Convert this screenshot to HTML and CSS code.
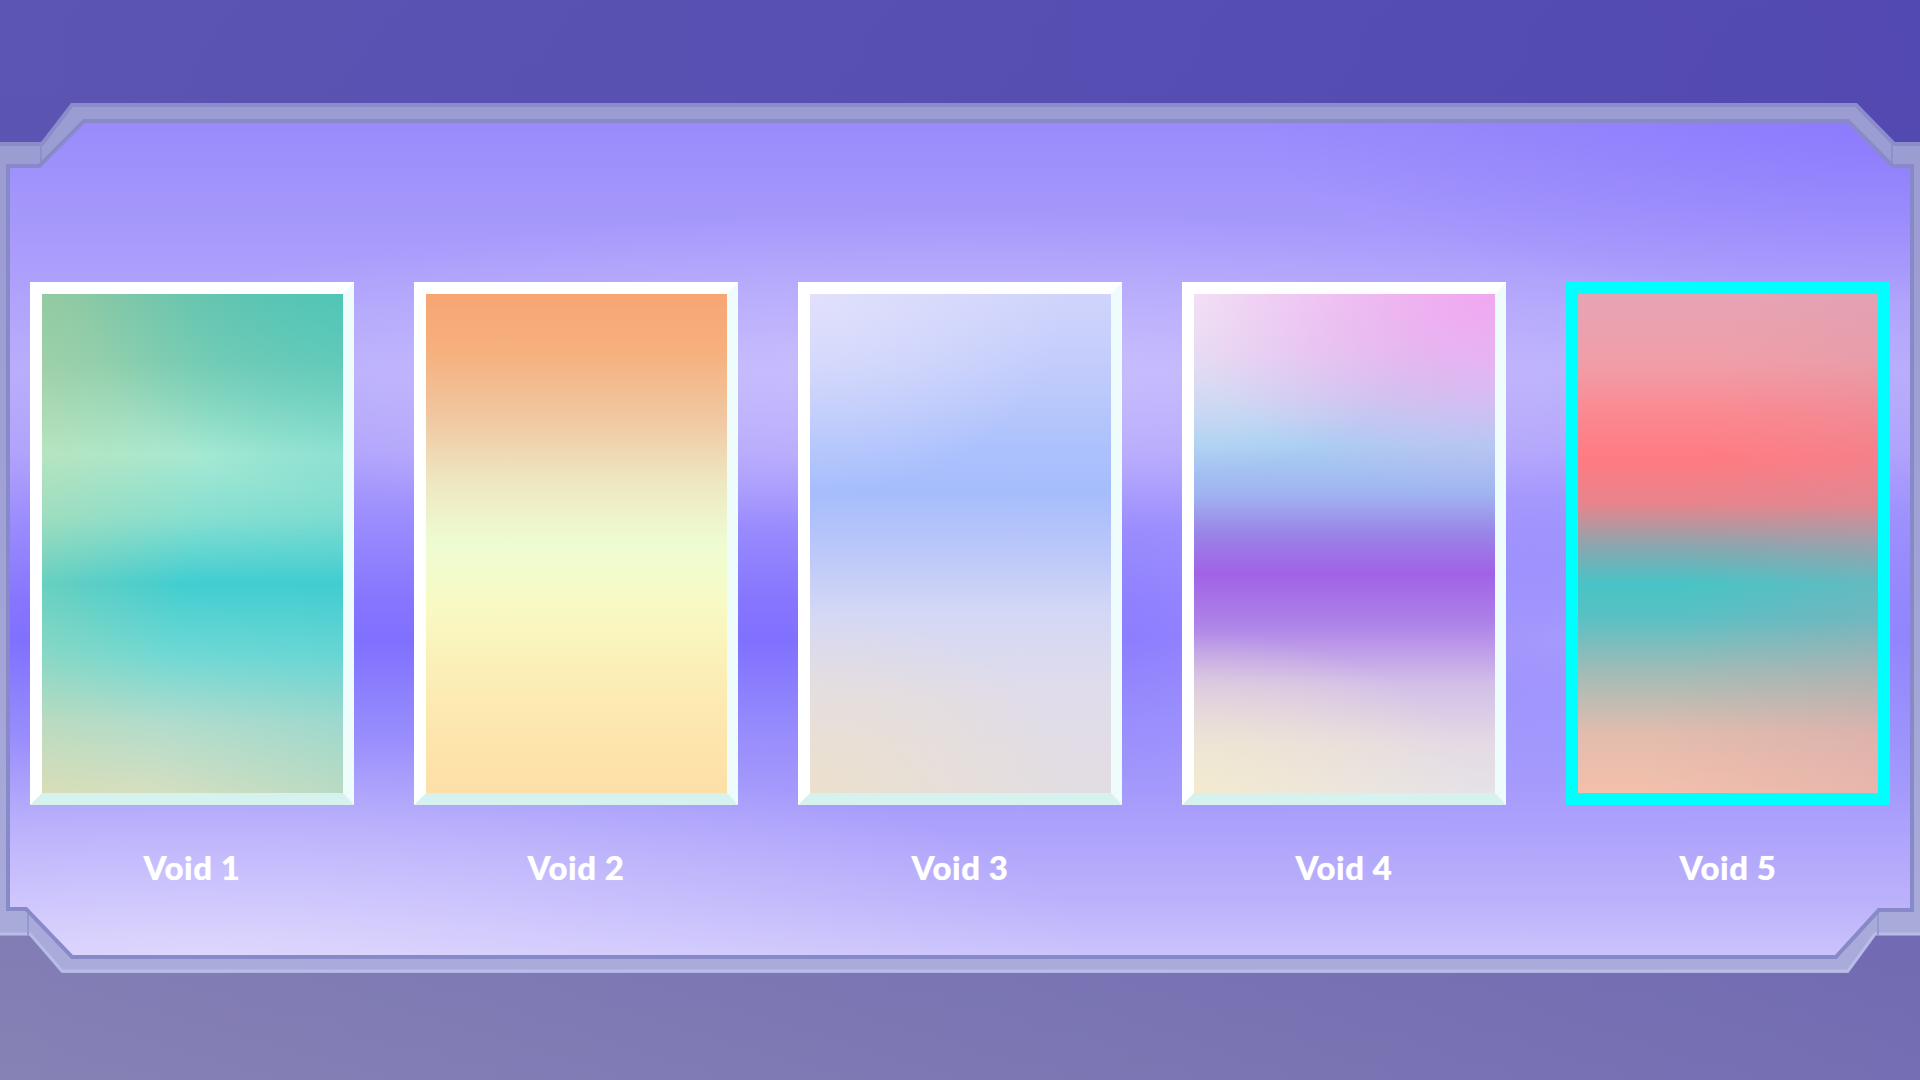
FILE: index.html
```html
<!DOCTYPE html>
<html lang="en">
<head>
<meta charset="utf-8">
<title>Void Selection</title>
<link rel="stylesheet" href="styles.css">
</head>
<body>
<div class="scene">
  <svg class="frame" viewBox="0 0 1920 1080" width="1920" height="1080" aria-hidden="true">
    <defs>
      <linearGradient id="frameGrad" x1="0" y1="0" x2="0" y2="1">
        <stop offset="0" stop-color="#9a9cd2"/>
        <stop offset="0.5" stop-color="#a0a2d5"/>
        <stop offset="1" stop-color="#a9acda"/>
      </linearGradient>
    </defs>
    <polygon fill="url(#frameGrad)" points="-10,142 43,142 73,103 1855,103 1893,142 1930,142 1930,935 1875,935 1848,973 62,973 30,935 -10,935"/>
    <polyline fill="none" stroke="#8b8dca" stroke-width="4" points="-10,144 42,144 72,105 1856,105 1894,144 1930,144"/>
    <polyline fill="none" stroke="#b9bce8" stroke-width="3" points="-10,934 30,934 62,971 1848,971 1875,934 1930,934"/>
    <line x1="41" y1="142" x2="41" y2="168" stroke="#8d8fcb" stroke-width="2"/>
    <line x1="1892" y1="142" x2="1892" y2="168" stroke="#8d8fcb" stroke-width="2"/>
    <line x1="28" y1="908" x2="28" y2="935" stroke="#9698cf" stroke-width="2"/>
    <line x1="1878" y1="908" x2="1878" y2="935" stroke="#9698cf" stroke-width="2"/>
    <polygon fill="none" stroke="#8789c8" stroke-width="8" stroke-linejoin="miter" points="10,168 40,168 85,123 1847,123 1892,168 1910,168 1910,908 1878,908 1835,955 73,955 27,907 10,907"/>
  </svg>

  <main class="panel">
    <div class="cards">
      <figure class="item">
        <div class="card card-1"></div>
        <figcaption class="label">Void 1</figcaption>
      </figure>
      <figure class="item">
        <div class="card card-2"></div>
        <figcaption class="label">Void 2</figcaption>
      </figure>
      <figure class="item">
        <div class="card card-3"></div>
        <figcaption class="label">Void 3</figcaption>
      </figure>
      <figure class="item">
        <div class="card card-4"></div>
        <figcaption class="label">Void 4</figcaption>
      </figure>
      <figure class="item">
        <div class="card card-5 selected"></div>
        <figcaption class="label">Void 5</figcaption>
      </figure>
    </div>
  </main>
</div>
</body>
</html>
```

FILE: styles.css
```css
html, body {
  margin: 0;
  padding: 0;
}

body {
  width: 1920px;
  height: 1080px;
  overflow: hidden;
  font-family: "Lato", "Open Sans", "DejaVu Sans", sans-serif;
}

.scene {
  position: relative;
  width: 1920px;
  height: 1080px;
  box-sizing: border-box;
  padding: 123px 10px 0 10px;
  overflow: hidden;
  background:
    linear-gradient(to right, rgba(255, 255, 255, 0) 0%, rgba(40, 20, 170, 0.18) 100%),
    linear-gradient(to bottom, #5c55b3 0%, #5a53b2 35%, #7c77b3 70%, #8682b5 100%);
}

.frame {
  position: absolute;
  left: 0;
  top: 0;
  z-index: 0;
}

.panel {
  position: relative;
  z-index: 1;
  width: 1900px;
  height: 832px;
  box-sizing: border-box;
  padding: 159px 20px 0 20px;
  clip-path: polygon(0 45px, 30px 45px, 75px 0, 1837px 0, 1882px 45px, 1900px 45px, 1900px 785px, 1868px 785px, 1825px 832px, 63px 832px, 17px 784px, 0 784px);
  background:
    radial-gradient(ellipse 650px 180px at 100% 0%, rgba(128, 108, 255, 0.55), rgba(128, 108, 255, 0)),
    radial-gradient(ellipse 900px 160px at 50% 30%, rgba(214, 204, 255, 0.55), rgba(214, 204, 255, 0)),
    radial-gradient(ellipse 650px 190px at 82% 62%, rgba(178, 168, 252, 0.75), rgba(178, 168, 252, 0)),
    radial-gradient(ellipse 900px 220px at 10% 100%, rgba(236, 232, 255, 0.55), rgba(236, 232, 255, 0)),
    linear-gradient(to bottom,
      #998bfc 0px,
      #a99cfb 127px,
      #b9aefb 247px,
      #b0a3fc 330px,
      #9a8cfd 400px,
      #8575ff 480px,
      #8070ff 517px,
      #958afc 600px,
      #aca1fb 700px,
      #bcb2fb 780px,
      #cbc3fb 832px);
}

.cards {
  display: flex;
  gap: 60px;
}

.item {
  margin: 0;
  width: 324px;
  display: flex;
  flex-direction: column;
  align-items: center;
}

.card {
  width: 324px;
  height: 523px;
  box-sizing: border-box;
  border-style: solid;
  border-width: 12px 11px 12px 12px;
  border-color: #ffffff #eefcfb #d6f2ef #ffffff;
}

.card.selected {
  border-color: #00ffff;
  border-width: 12px;
}

.label {
  margin-top: 42px;
  font-size: 33px;
  line-height: 40px;
  font-weight: 900;
  color: #ffffff;
  letter-spacing: 0.5px;
  text-shadow: 0 0 1px rgba(255, 255, 255, 0.6);
}

.card-1 {
  background:
    radial-gradient(ellipse 260px 200px at 100% 0%, rgba(60, 198, 190, 0.55), rgba(60, 198, 190, 0)),
    linear-gradient(100deg, rgba(225, 215, 140, 0.32) 0%, rgba(225, 215, 140, 0) 50%, rgba(60, 200, 210, 0.18) 100%),
    linear-gradient(to bottom,
      #6fc4ac 0%,
      #80cdb4 14%,
      #a6e9d3 32%,
      #86dfd0 45%,
      #42cdd0 58%,
      #6ed8d4 72%,
      #b2dccc 86%,
      #d6dfc0 100%);
}

.card-2 {
  background:
    linear-gradient(to bottom,
      #f7a573 0%,
      #f6b17f 12%,
      #f0c8a2 25%,
      #eee8c2 38%,
      #eefcd2 50%,
      #f8fac4 62%,
      #fbefb7 75%,
      #fde6ad 88%,
      #fddfa8 100%);
}

.card-3 {
  background:
    radial-gradient(ellipse 260px 200px at 0% 0%, rgba(232, 230, 252, 0.7), rgba(232, 230, 252, 0)),
    radial-gradient(ellipse 260px 180px at 0% 100%, rgba(240, 226, 196, 0.7), rgba(240, 226, 196, 0)),
    linear-gradient(to bottom,
      #d0d4fb 0%,
      #c2ccfb 15%,
      #adc2fc 30%,
      #a6bdfc 40%,
      #bcc8f9 52%,
      #d4d8f5 64%,
      #e0dcea 80%,
      #e2dde2 100%);
}

.card-4 {
  background:
    radial-gradient(ellipse 320px 200px at 100% 0%, rgba(242, 160, 240, 0.85), rgba(242, 160, 240, 0)),
    radial-gradient(ellipse 240px 180px at 0% 0%, rgba(244, 232, 246, 0.8), rgba(244, 232, 246, 0)),
    radial-gradient(ellipse 280px 160px at 0% 100%, rgba(246, 236, 200, 0.8), rgba(246, 236, 200, 0)),
    linear-gradient(to bottom,
      #e8d0f2 0%,
      #d8cef0 12%,
      #b8d2f2 24%,
      #a8d0f2 30%,
      #a0b4f0 40%,
      #9a84e8 48%,
      #a062e6 56%,
      #ae82e8 66%,
      #d2bee8 78%,
      #e4dae4 90%,
      #e6e2e8 100%);
}

.card-5 {
  background:
    linear-gradient(100deg, rgba(255, 255, 255, 0) 40%, rgba(200, 150, 170, 0.25) 100%),
    linear-gradient(to bottom,
      #e6a4b4 0%,
      #f09ea8 14%,
      #fb8890 24%,
      #ff7b82 33%,
      #e8848c 42%,
      #86a8b0 51%,
      #48c4c6 58%,
      #5ac0c4 65%,
      #a2bcb6 76%,
      #e2bcae 88%,
      #f4c0ac 100%);
}
```
